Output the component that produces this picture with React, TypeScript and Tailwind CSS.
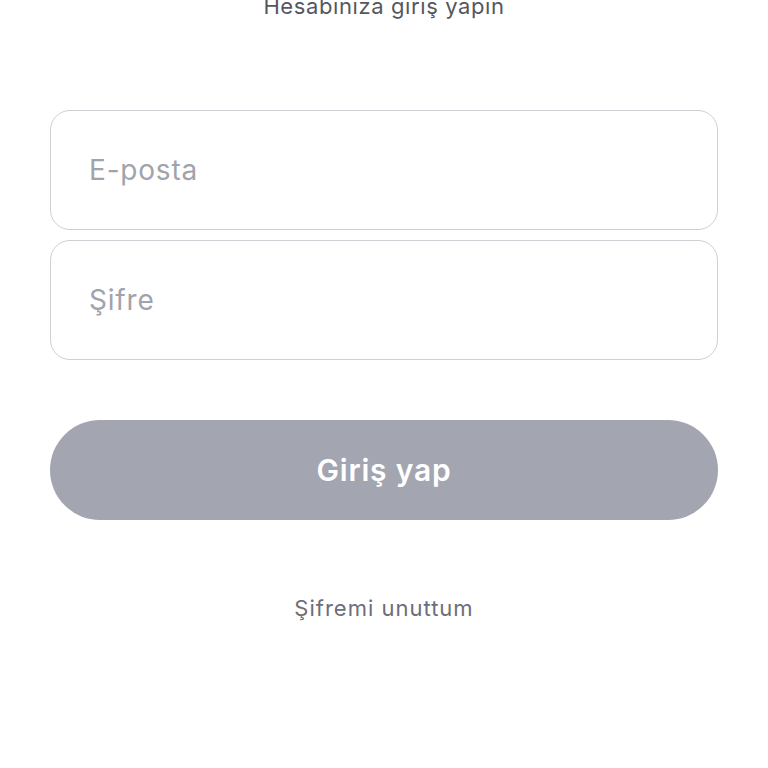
export default function App() {
  return (
    <div className="min-h-[768px] w-full bg-white font-['Inter',sans-serif] overflow-hidden">
      <div className="flex flex-col items-stretch px-[50px]">
        <p className="-mt-[5px] text-center text-[22px] leading-[22px] text-[#55575f] tracking-[0.6px]">
          Hesabınıza giriş yapın
        </p>

        <div className="mt-[93px] flex flex-col gap-[10px]">
          <input
            type="email"
            placeholder="E-posta"
            className="h-[120px] w-full rounded-[20px] border border-[#cfd0d5] bg-white px-[38px] text-[28px] tracking-[0.8px] text-[#3a3c44] outline-none placeholder:text-[#a1a3ac]"
          />
          <input
            type="password"
            placeholder="Şifre"
            className="h-[120px] w-full rounded-[20px] border border-[#cfd0d5] bg-white px-[38px] text-[28px] tracking-[0.8px] text-[#3a3c44] outline-none placeholder:text-[#a1a3ac]"
          />
        </div>

        <button
          type="button"
          className="mt-[60px] h-[100px] w-full rounded-full bg-[#a3a5b1] text-[30px] font-semibold tracking-[0.8px] text-white"
        >
          Giriş yap
        </button>

        <p className="mt-[74px] text-center text-[22px] leading-[28px] tracking-[1px] text-[#6c6e78]">
          Şifremi unuttum
        </p>
      </div>
    </div>
  )
}
